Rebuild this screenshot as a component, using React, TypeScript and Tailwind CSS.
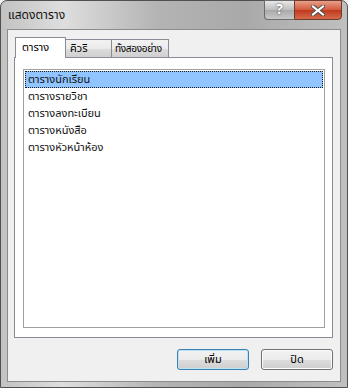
import React from 'react';

const font = { fontFamily: 'Tahoma, "Noto Sans Thai", "Noto Sans", "DejaVu Sans", sans-serif' };

const tables = ['ตารางนักเรียน', 'ตารางรายวิชา', 'ตารางลงทะเบียน', 'ตารางหนังสือ', 'ตารางหัวหน้าห้อง'];

const App: React.FC = () => {
  return (
    <div className="w-[348px] h-[388px] bg-[#f0f0f0] text-[12px] text-black" style={font}>
      <div className="w-[348px] h-[388px] flex flex-col rounded-t-[7px] border border-[#505050] bg-[linear-gradient(90deg,#c2c2c2_0%,#dedede_18%,#b4b4b4_45%,#a9a9a9_70%,#c0c0c0_100%)] px-[6px] pb-[5px]">
        {/* title bar */}
        <div className="h-[28px] flex items-start shrink-0">
          <div className="pl-[1px] pt-[5px] text-[12px] text-[#111] leading-[18px]">แสดงตาราง</div>
          <div className="ml-auto flex -mr-[1px] -mt-[1px]">
            <div className="w-[30px] h-[20px] flex items-center justify-center rounded-bl-[4px] border border-[#6b6b6b] border-r-0 bg-[linear-gradient(180deg,#e8e8e8,#bdbdbd_50%,#a9a9a9_51%,#c8c8c8)] text-white font-bold text-[14px] leading-none [text-shadow:0_0_2px_#333]">
              ?
            </div>
            <div className="w-[48px] h-[20px] flex items-center justify-center rounded-br-[4px] border border-[#6b3b30] bg-[linear-gradient(180deg,#e8a08a,#d3583b_50%,#c0391f_51%,#d66a48)]">
              <svg width="14" height="11" viewBox="0 0 14 11">
                <path d="M2 1.5 L12 9.5 M12 1.5 L2 9.5" stroke="#4a4a4a" strokeWidth="4" strokeLinecap="square" />
                <path d="M2 1.5 L12 9.5 M12 1.5 L2 9.5" stroke="#ffffff" strokeWidth="2.2" strokeLinecap="square" />
              </svg>
            </div>
          </div>
        </div>
        {/* client */}
        <div className="flex-1 border border-[#8c8c8c] bg-[#f0f0f0] flex flex-col pl-[6px] pr-[7px]">
          {/* tab strip */}
          <div className="h-[27px] flex items-end pl-[1px] shrink-0">
            <div className="relative z-10 -mb-[1px] w-[51px] h-[21px] border border-b-0 border-[#898c95] bg-white pl-[6px] pt-[3px] leading-[14px] text-[11px] whitespace-nowrap">
              ตาราง
            </div>
            <div className="w-[46px] h-[18px] border border-l-0 border-b-0 border-[#898c95] bg-[linear-gradient(180deg,#f2f2f2,#ebebeb_50%,#dddddd_51%,#cfcfcf)] pl-[4px] pt-[2px] leading-[14px] text-[11px] whitespace-nowrap">
              คิวริ
            </div>
            <div className="w-[57px] h-[18px] border border-l-0 border-b-0 border-[#898c95] bg-[linear-gradient(180deg,#f2f2f2,#ebebeb_50%,#dddddd_51%,#cfcfcf)] pl-[3px] pt-[2px] leading-[14px] text-[10px] tracking-[-0.3px] whitespace-nowrap overflow-hidden">
              ทั้งสองอย่าง
            </div>
          </div>
          {/* tab page */}
          <div className="h-[281px] border border-[#898c95] bg-white pl-[8px] pr-[7px] pt-[11px] pb-[9px] shrink-0">
            <div className="h-full border border-[#a0a0a0] bg-white p-[1px] pr-[0px]">
              {tables.map((t, i) => (
                <div
                  key={t}
                  className={
                    i === 0
                      ? 'h-[17px] mr-[1px] pl-[2px] leading-[15px] text-[11px] text-[#111] bg-[#91c5ff] border border-dotted border-[#1a1a1a]'
                      : 'h-[17px] pl-[3px] leading-[17px] text-[11px] text-[#111]'
                  }
                >
                  {t}
                </div>
              ))}
            </div>
          </div>
          {/* buttons */}
          <div className="flex-1 flex items-start justify-end gap-[12px] pt-[11px]">
            <button className="w-[72px] h-[21px] rounded-[3px] border border-[#3c7fb1] bg-[linear-gradient(180deg,#f2f2f2,#ebebeb_50%,#dddddd_51%,#cfcfcf)] text-[11px] leading-none shadow-[inset_0_0_0_1px_#b9e4f7]">
              เพิ่ม
            </button>
            <button className="w-[72px] h-[21px] rounded-[3px] border border-[#707070] bg-[linear-gradient(180deg,#f2f2f2,#ebebeb_50%,#dddddd_51%,#cfcfcf)] text-[11px] leading-none shadow-[inset_0_0_0_1px_#fcfcfc]">
              ปิด
            </button>
          </div>
        </div>
      </div>
    </div>
  );
};

export default App;
